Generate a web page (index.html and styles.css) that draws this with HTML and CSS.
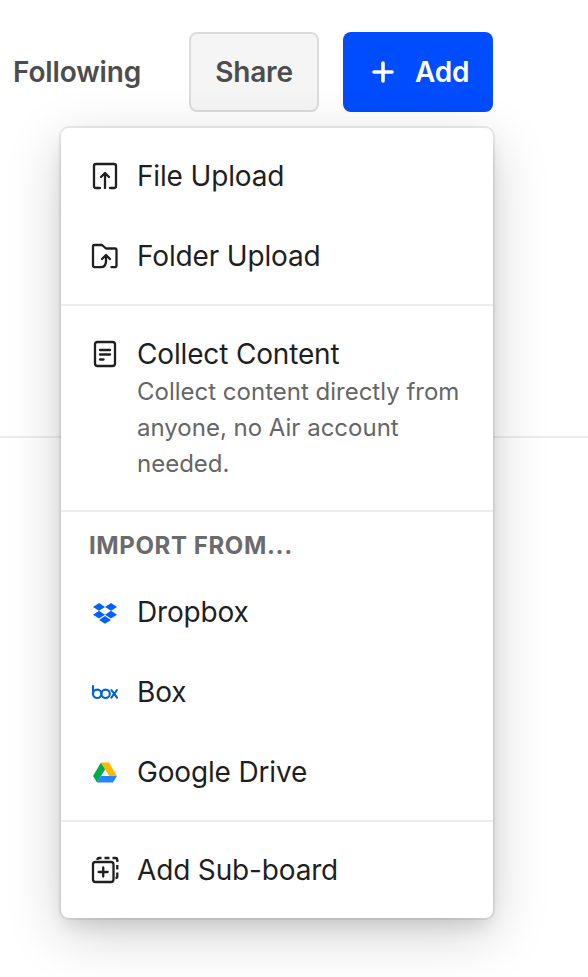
FILE: index.html
```html
<!DOCTYPE html>
<html lang="en">
<head>
    <meta charset="UTF-8">
    <meta name="viewport" content="width=device-width, initial-scale=1.0">
    <title>Board</title>
    <link rel="stylesheet" href="styles.css">
</head>
<body>
    <header class="toolbar">
        <button class="btn btn-text">Following</button>
        <button class="btn btn-share">Share</button>
        <div class="add-wrap">
            <button class="btn btn-add">
                <svg class="plus" viewBox="0 0 22 22" fill="none" stroke="currentColor" stroke-width="3.6" stroke-linecap="round">
                    <path d="M11 2v18M2 11h18"/>
                </svg>
                Add
            </button>
            <div class="menu">
                <div class="group">
                    <a class="item">
                        <svg class="icon" viewBox="0 0 32 32">
                            <path d="M11 28H7A2 2 0 0 1 5 26V6A2 2 0 0 1 7 4H25A2 2 0 0 1 27 6V26A2 2 0 0 1 25 28H21M16 28V13.500M12 17L16 13L20 17"/>
                        </svg>
                        <span>File Upload</span>
                    </a>
                    <a class="item">
                        <svg class="icon" viewBox="0 0 32 32">
                            <path d="M22.500 27.200H25.500A2 2 0 0 0 27.500 25.200V10A1.500 1.500 0 0 0 26 8.500H17L13 5H5.500A1.500 1.500 0 0 0 4 6.500V25.200A2 2 0 0 0 6 27.200H11.500C15.500 27.200 17 25 17 21V15.500M13 19L17 15L21 19"/>
                        </svg>
                        <span>Folder Upload</span>
                    </a>
                </div>
                <div class="group">
                    <a class="item item-tall">
                        <svg class="icon" viewBox="0 0 32 32">
                            <rect x="6" y="4" width="20" height="24" rx="2.500"/>
                            <path d="M11 12H21M11 16.500H21M11 21.500H14.500"/>
                        </svg>
                        <span>Collect Content
                            <small class="hint">Collect content directly from anyone, no Air account needed.</small>
                        </span>
                    </a>
                </div>
                <div class="group group-import">
                    <div class="heading">Import from...</div>
                    <a class="item">
                        <svg class="logo" viewBox="0 0 32 32" fill="#0061ff">
                            <path d="M10 7L16 10.900L10 14.800L4 10.900ZM22 7L28 10.900L22 14.800L16 10.900ZM10 14.800L16 18.700L10 22.600L4 18.700ZM22 14.800L28 18.700L22 22.600L16 18.700ZM16 20L22 23.900L16 27.800L10 23.900Z"/>
                        </svg>
                        <span>Dropbox</span>
                    </a>
                    <a class="item">
                        <svg class="logo" viewBox="0 0 32 32" fill="none" stroke="#0061d5" stroke-width="2.100" stroke-linecap="round" stroke-linejoin="round">
                            <path d="M4 10V17.800"/>
                            <circle cx="8.200" cy="17.800" r="4.200"/>
                            <circle cx="16.600" cy="17.800" r="4.200"/>
                            <path d="M22.400 14L28 21.600M28 14L22.400 21.600"/>
                        </svg>
                        <span>Box</span>
                    </a>
                    <a class="item">
                        <svg class="logo" viewBox="0 0 32 32">
                            <path fill="#00ac47" d="M12 6.500L4 20L8 26.500L16.200 13.300Z"/>
                            <path fill="#ffba00" d="M12 6.500H20L28 20H20Z"/>
                            <path fill="#2684fc" d="M12 20H28L24 26.500H8Z"/>
                        </svg>
                        <span>Google Drive</span>
                    </a>
                </div>
                <div class="group">
                    <a class="item">
                        <svg class="icon" viewBox="0 0 32 32">
                            <rect x="4" y="8" width="20.500" height="20" rx="2.500"/>
                            <path d="M14.200 13.500V22.500M9.700 18H18.700"/>
                            <path class="dashes" d="M8.500 6V5.500Q8.500 4 10 4H12.500M15.500 4H20.500M23.500 4H26.500Q28.300 4 28.300 6V8M28.300 11V15.500M28.300 18.500V22.500Q28.300 24 26.500 24"/>
                        </svg>
                        <span>Add Sub-board</span>
                    </a>
                </div>
            </div>
        </div>
    </header>
    <main class="content"></main>
</body>
</html>
```

FILE: styles.css
```css
* {
    box-sizing: border-box;
}

body {
    margin: 0;
    min-height: 100vh;
    background: #fff;
    color: #1f1f1f;
    font-family: Inter, "Liberation Sans", sans-serif;
}

.toolbar {
    display: flex;
    justify-content: flex-end;
    height: 438px;
    padding: 32px 95px 0 0;
    border-bottom: 2px solid #ededed;
}

.content {
    height: 539px;
}

.btn {
    height: 80px;
    border: none;
    border-radius: 8px;
    font: 600 28px/34px Inter, "Liberation Sans", sans-serif;
    letter-spacing: -0.16px;
    color: #4d4d4d;
}

.btn-text {
    background: none;
    padding: 0;
    margin-right: 48px;
}

.btn-share {
    width: 130px;
    margin-right: 24px;
    padding: 0;
    background: #f5f5f5;
    border: 2px solid #dbdbdb;
}

.add-wrap {
    position: relative;
}

.btn-add {
    display: flex;
    align-items: center;
    gap: 21px;
    width: 150px;
    padding: 0 0 0 29px;
    background: #004cff;
    color: #fff;
}

.plus {
    width: 22px;
    height: 22px;
}

.menu {
    position: absolute;
    top: 96px;
    right: 0;
    width: 432px;
    background: #fff;
    border-radius: 8px;
    box-shadow: 0 0 0 2px rgba(0, 0, 0, 0.07), 0 10px 20px -4px rgba(0, 0, 0, 0.12), 0 16px 56px rgba(0, 0, 0, 0.18);
}

.group {
    padding: 8px 0;
}

.group + .group {
    border-top: 2px solid #ededed;
}

.item {
    display: flex;
    align-items: center;
    gap: 16px;
    height: 80px;
    padding: 0 28px;
    font-size: 28px;
    line-height: 40px;
    letter-spacing: -0.16px;
}

.item-tall {
    align-items: flex-start;
    height: 188px;
    padding-top: 20px;
}

.item-tall .icon {
    margin-top: 4px;
}

.icon,
.logo {
    flex: none;
    width: 32px;
    height: 32px;
}

.icon {
    fill: none;
    stroke: #1f1f1f;
    stroke-width: 2.3;
    stroke-linecap: round;
    stroke-linejoin: round;
}

.dashes {
    stroke-linecap: butt;
}

.hint {
    display: block;
    font-size: 24px;
    line-height: 36px;
    letter-spacing: 0;
    color: #666;
}

.heading {
    padding: 6px 28px 0;
    height: 52px;
    font-size: 24px;
    font-weight: 700;
    line-height: 40px;
    letter-spacing: 0.6px;
    text-transform: uppercase;
    color: #6b6b6b;
}
```
